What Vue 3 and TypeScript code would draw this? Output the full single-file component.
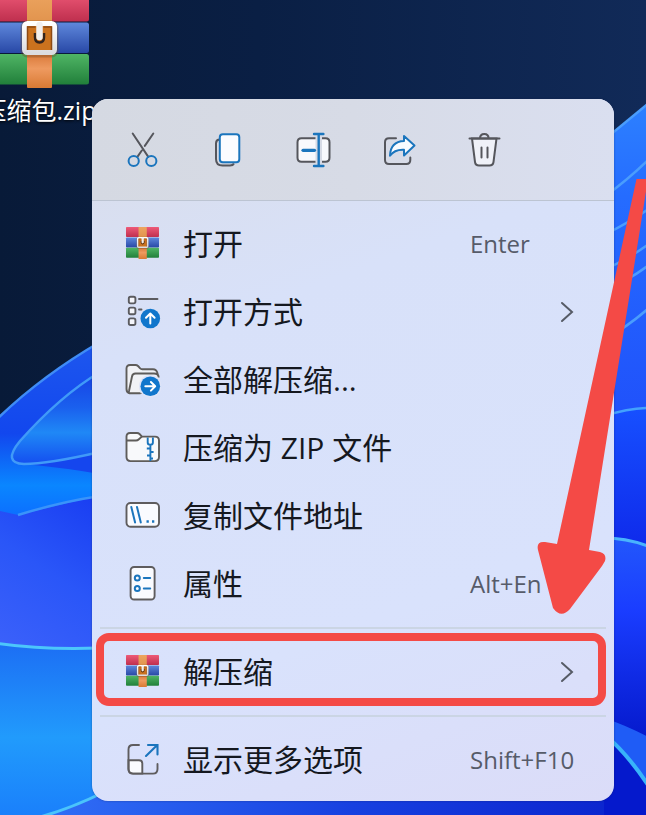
<script setup lang="ts">
interface Tool {
  icon: string
  label: string
}

interface MenuEntry {
  icon: string
  label: string
  shortcut?: string
  submenu?: boolean
  marked?: boolean
}

const tools: Tool[] = [
  { icon: 'cut', label: '剪切' },
  { icon: 'copy', label: '复制' },
  { icon: 'rename', label: '重命名' },
  { icon: 'share', label: '共享' },
  { icon: 'trash', label: '删除' },
]

const groups: MenuEntry[][] = [
  [
    { icon: 'archive', label: '打开', shortcut: 'Enter' },
    { icon: 'open-with', label: '打开方式', submenu: true },
    { icon: 'extract', label: '全部解压缩...' },
    { icon: 'zip', label: '压缩为 ZIP 文件' },
    { icon: 'path', label: '复制文件地址' },
    { icon: 'properties', label: '属性', shortcut: 'Alt+En' },
  ],
  [{ icon: 'archive', label: '解压缩', submenu: true, marked: true }],
  [{ icon: 'more', label: '显示更多选项', shortcut: 'Shift+F10' }],
]
</script>

<template>
  <svg class="sprite" aria-hidden="true">
    <defs>
      <linearGradient id="g-red" x1="0" y1="0" x2="0" y2="1">
        <stop offset="0" stop-color="#ee5a78" />
        <stop offset="1" stop-color="#bf2f4e" />
      </linearGradient>
      <linearGradient id="g-blue" x1="0" y1="0" x2="0" y2="1">
        <stop offset="0" stop-color="#5f88dc" />
        <stop offset="1" stop-color="#2848a6" />
      </linearGradient>
      <linearGradient id="g-green" x1="0" y1="0" x2="0" y2="1">
        <stop offset="0" stop-color="#4fb565" />
        <stop offset="1" stop-color="#217f3a" />
      </linearGradient>
      <linearGradient id="g-strap" x1="0" y1="0" x2="0" y2="1">
        <stop offset="0" stop-color="#eda560" />
        <stop offset="0.3" stop-color="#e2954f" />
        <stop offset="0.65" stop-color="#d9793a" />
        <stop offset="0.8" stop-color="#ee9a60" />
        <stop offset="1" stop-color="#d97a34" />
      </linearGradient>
      <linearGradient id="g-buckle" x1="0" y1="0" x2="0" y2="1">
        <stop offset="0" stop-color="#ffffff" />
        <stop offset="1" stop-color="#dcdce0" />
      </linearGradient>
    </defs>

    <symbol id="i-archive" viewBox="0 0 36 36">
      <g transform="translate(1 1) scale(0.33)">
        <use href="#archive-art" />
      </g>
    </symbol>
    <symbol id="i-archive-large" viewBox="0 0 100 97">
      <g id="archive-art">
        <rect x="0" y="0" width="100" height="30.5" rx="2.5" fill="url(#g-red)" />
        <rect x="0" y="31.5" width="100" height="30.5" rx="2.5" fill="url(#g-blue)" />
        <rect x="0" y="63" width="100" height="30.5" rx="2.5" fill="url(#g-green)" />
        <rect x="38" y="0" width="25" height="97" rx="1" fill="url(#g-strap)" />
        <rect x="35.5" y="33.5" width="30" height="29" rx="3" fill="none" stroke="#6d4420" stroke-width="8" stroke-opacity="0.35" />
        <rect x="35.5" y="32.5" width="30" height="29" rx="3" fill="#cb721e" stroke="url(#g-buckle)" stroke-width="5" />
        <path d="M38.500 59V36h8M54.500 36h8v23" fill="none" stroke="#8d4a14" stroke-width="1.5" />
        <path d="M46 42v4q0 5.500 4.500 5.500T55 46v-4" fill="none" stroke="#33241e" stroke-width="2.5" />
        <path d="M50.500 34v12" stroke="#f1efef" stroke-width="6.500" stroke-linecap="round" />
      </g>
    </symbol>

    <symbol id="i-cut" viewBox="0 0 40 40">
      <g fill="none" stroke-width="2">
        <path d="M9.7 3.500l15.6 23.400M30.300 3.500l-8.500 12.400M18.800 20.500l-4.400 6.400" stroke="#55565c" stroke-linecap="round" />
        <circle cx="10.7" cy="31" r="5.100" stroke="#1b75bd" />
        <circle cx="28.3" cy="31" r="5.100" stroke="#1b75bd" />
      </g>
    </symbol>
    <symbol id="i-copy" viewBox="0 0 40 40">
      <g fill="none" stroke-width="2">
        <path d="M11 9.500q-3 .5-3 4V29q0 6.500 6.500 6.500H22q3 0 4-2" stroke="#55565c" />
        <rect x="11.8" y="4.300" width="19.500" height="28" rx="3" fill="#fbfcff" stroke="#1b75bd" />
      </g>
    </symbol>
    <symbol id="i-rename" viewBox="0 0 40 40">
      <g fill="none" stroke-width="2">
        <path d="M22.500 8.300H8.500q-4 0-4 4v15.400q0 4 4 4h14zM29 8.300h3.500q4 0 4 4v15.400q0 4-4 4H29z" fill="#f8f9fd" />
        <path d="M22.500 8.300H8.500q-4 0-4 4v15.400q0 4 4 4h14M29 8.300h3.500q4 0 4 4v15.400q0 4-4 4H29" stroke="#55565c" />
        <path d="M10 20.300h11.500" stroke="#1b75bd" stroke-width="3.200" stroke-linecap="round" />
        <path d="M25.700 4v32M21 4h9.400M21 36h9.400" stroke="#1b75bd" stroke-width="2.400" stroke-linecap="round" />
      </g>
    </symbol>
    <symbol id="i-share" viewBox="0 0 40 40">
      <g fill="none" stroke-width="2" stroke-linejoin="round" stroke-linecap="round">
        <path d="M18 8.300h-7q-4 0-4 4V30q0 4 4 4h17.300q4 0 4-4v-2.500" stroke="#55565c" />
        <path d="M26 6l10.500 9.500L26 25.500v-5.800q-9.500-.5-14 6Q12.500 11.500 26 11z" fill="#f8fbff" stroke="#1b75bd" />
      </g>
    </symbol>
    <symbol id="i-trash" viewBox="0 0 40 40">
      <g fill="none" stroke="#55565c" stroke-width="2" stroke-linecap="round">
        <path d="M9 8.500l3 23.500q.5 3.500 4 3.500h10.500q3.500 0 4-3.500l3-23.500z" fill="#eff1f8" />
        <path d="M6.500 8.500h30M17 8.500Q17 4 21.300 4t4.300 4.500M18.500 17.500v10M24.500 17.500v10" />
      </g>
    </symbol>

    <symbol id="i-open-with" viewBox="0 0 36 36">
      <g fill="#f4f5fa" stroke="#5b5b5f" stroke-width="1.9">
        <rect x="3.8" y="2.800" width="6.600" height="6.600" rx="1.800" />
        <rect x="3.8" y="13.600" width="6.600" height="6.600" rx="1.800" />
        <rect x="3.8" y="24.400" width="6.600" height="6.600" rx="1.800" />
        <path d="M14 5h18.500M14 15.500h2.500" stroke-linecap="round" />
      </g>
      <circle cx="25.3" cy="24.500" r="9.800" fill="#1076cc" />
      <path d="M25.300 29.500v-9.500M21 23.800l4.300-4.300 4.300 4.300" fill="none" stroke="#fff" stroke-width="2" stroke-linecap="round" stroke-linejoin="round" />
    </symbol>
    <symbol id="i-extract" viewBox="0 0 36 36">
      <g fill="#f1f2f6" stroke="#5e5c5a" stroke-width="1.9" stroke-linejoin="round">
        <path d="M4.500 31q-3-.5-3-4V6.500Q1.500 3 5 3h5.500q1.500 0 2.500 1l2.200 2.400q.8.800 2 .8H28q3.500 0 4.500 4v3L26 31z" />
        <path d="M4.500 31.200Q3.500 31 4 29l3-14.500q.6-3 3.500-3h18.500q4.500 0 4.700 4L30 31.200z" stroke="none" />
        <path d="M15.500 31.200h-11Q3.500 31 4 29l3-14.500q.6-3 3.500-3h18.500q4.500 0 4.700 4" fill="none" />
      </g>
      <circle cx="25.3" cy="24.300" r="11.300" fill="#dee4f8" />
      <circle cx="25.3" cy="24.300" r="9.800" fill="#1076cc" />
      <path d="M20.300 24.300h9.500M25.900 20l4.300 4.300-4.300 4.300" fill="none" stroke="#fff" stroke-width="2" stroke-linecap="round" stroke-linejoin="round" />
    </symbol>
    <symbol id="i-zip" viewBox="0 0 36 36">
      <g fill="none" stroke="#5e5c5a" stroke-width="1.9" stroke-linejoin="round">
        <path d="M1.500 6.500Q1.500 3 5 3h7q1.500 0 2.500 1l2.500 2.600H30q4 0 4 4v16.500q0 4-4 4H5.500q-4 0-4-4z" fill="#f8f9fb" />
        <path d="M1.500 10.500H11q1.600 0 2.600-1L16.800 6.600" />
      </g>
      <path d="M22.700 7.500v5q0 2.300 2.600 2.300t2.600-2.300v-5M25.400 15v16M21.800 18.500h3.600M25.400 22h3.200M22 25.500h3.400M25.400 28.500h2.600" fill="none" stroke="#1b75bd" stroke-width="1.9" />
    </symbol>
    <symbol id="i-path" viewBox="0 0 36 36">
      <rect x="1.5" y="5" width="32.500" height="23.800" rx="4" fill="#fafbff" stroke="#5e5c5e" stroke-width="1.9" />
      <path d="M6.300 9l3.800 15.500M12 9l3.800 15.500" fill="none" stroke="#1b75bd" stroke-width="2" stroke-linecap="round" />
      <path d="M21.500 23.600h2.300M27 23.600h2.300" stroke="#1b75bd" stroke-width="2.500" />
    </symbol>
    <symbol id="i-properties" viewBox="0 0 36 36">
      <rect x="5.6" y="1" width="24" height="32.500" rx="3.500" fill="#fafbff" stroke="#5e5c5e" stroke-width="1.9" />
      <g fill="none" stroke="#1b75bd" stroke-width="2">
        <circle cx="12.3" cy="12" r="2.500" />
        <circle cx="12.3" cy="22.400" r="2.500" />
        <path d="M18.800 12h6.400M18.800 22.400h6.400" stroke-linecap="round" />
      </g>
    </symbol>
    <symbol id="i-more" viewBox="0 0 36 36">
      <g fill="none" stroke-width="1.9" stroke-linecap="round">
        <path d="M3.500 18.300H14q3.300 0 3.300 3.300v10H8q-4.500 0-4.500-4.500z" fill="#fafbff" stroke="#5e5c5e" />
        <path d="M14 3H8Q3.500 3 3.500 7.500V27q0 4.600 4.500 4.600h20q4.500 0 4.500-4.600v-5" stroke="#5e5c5e" />
        <path d="M21 14L32 3.300M23 3h9.500v9.500" stroke="#1b75bd" stroke-width="2.100" />
      </g>
    </symbol>
  </svg>

  <main class="desktop">
    <svg class="wallpaper" viewBox="0 0 646 815" preserveAspectRatio="xMidYMid slice" aria-hidden="true">
      <defs>
        <linearGradient id="w-sky" x1="0" y1="0" x2="1" y2="0">
          <stop offset="0" stop-color="#081a38" />
          <stop offset="0.4" stop-color="#0a1f44" />
          <stop offset="1" stop-color="#112a58" />
        </linearGradient>
        <linearGradient id="w-outer" x1="0" y1="347" x2="0" y2="520" gradientUnits="userSpaceOnUse">
          <stop offset="0" stop-color="#1d56ee" />
          <stop offset="0.5" stop-color="#1247ee" />
          <stop offset="0.8" stop-color="#0a86ff" />
          <stop offset="1" stop-color="#0c6cff" />
        </linearGradient>
        <linearGradient id="w-inner" x1="0" y1="378" x2="0" y2="462" gradientUnits="userSpaceOnUse">
          <stop offset="0" stop-color="#1746e6" />
          <stop offset="0.35" stop-color="#1a60ee" />
          <stop offset="0.65" stop-color="#1f88f6" />
          <stop offset="1" stop-color="#1552f0" />
        </linearGradient>
        <linearGradient id="w-mid" x1="92" y1="500" x2="0" y2="640" gradientUnits="userSpaceOnUse">
          <stop offset="0" stop-color="#1a3ff2" />
          <stop offset="0.5" stop-color="#2a56f8" />
          <stop offset="1" stop-color="#3a60fa" />
        </linearGradient>
        <linearGradient id="w-low" x1="0" y1="643" x2="0" y2="815" gradientUnits="userSpaceOnUse">
          <stop offset="0" stop-color="#1c6ef4" />
          <stop offset="0.55" stop-color="#219bfc" />
          <stop offset="1" stop-color="#1a80fb" />
        </linearGradient>
        <linearGradient id="w-base" x1="60" y1="0" x2="646" y2="0" gradientUnits="userSpaceOnUse">
          <stop offset="0" stop-color="#2f6cf5" />
          <stop offset="0.5" stop-color="#1740e0" />
          <stop offset="1" stop-color="#0a22cc" />
        </linearGradient>
        <linearGradient id="w-r1" x1="0" y1="105" x2="0" y2="410" gradientUnits="userSpaceOnUse">
          <stop offset="0" stop-color="#2d80ff" />
          <stop offset="0.3" stop-color="#256cff" />
          <stop offset="1" stop-color="#2052fb" />
        </linearGradient>
        <linearGradient id="w-r2" x1="0" y1="408" x2="0" y2="540" gradientUnits="userSpaceOnUse">
          <stop offset="0" stop-color="#1750ff" />
          <stop offset="1" stop-color="#0f2cec" />
        </linearGradient>
        <linearGradient id="w-r3" x1="0" y1="540" x2="0" y2="740" gradientUnits="userSpaceOnUse">
          <stop offset="0" stop-color="#2256fb" />
          <stop offset="0.35" stop-color="#1a3dff" />
          <stop offset="1" stop-color="#0519cc" />
        </linearGradient>
      </defs>
      <rect width="646" height="815" fill="url(#w-sky)" />

      <path d="M-5 421Q40 377 100 342V540H-5z" fill="url(#w-outer)" />
      <path d="M-5 421Q40 377 100 342" fill="none" stroke="#3f8cf6" stroke-width="2.5" />
      <path d="M100 372Q60 396 20 441Q2 463 24 464Q48 464 100 452z" fill="url(#w-inner)" />
      <path d="M24 464Q50 463 100 452V474Q66 468 24 464z" fill="#1546ee" />
      <path d="M100 372Q60 396 20 441Q2 463 24 464Q48 464 100 452" fill="none" stroke="#409af8" stroke-width="2.5" />
      <path d="M-5 510L18 515Q60 505 100 495V660H-5z" fill="url(#w-mid)" />
      <path d="M18 515Q60 502 100 496" fill="none" stroke="#3a94fa" stroke-width="2.5" />

      <path d="M-5 643Q40 650 100 648V815H-5z" fill="url(#w-low)" />
      <path d="M-5 643Q40 650 100 648" fill="none" stroke="#4cc6fb" stroke-width="3" />
      <path d="M40 817Q72 808 104 792H646V817z" fill="url(#w-base)" />
      <path d="M40 817Q72 808 104 792" fill="none" stroke="#4ac4fb" stroke-width="3" />

      <path d="M604 140L650 102V420H604z" fill="url(#w-r1)" />
      <g fill="none" stroke="#4a9dfd" stroke-width="2.5">
        <path d="M604 140L650 102" />
        <path d="M604 197Q630 178 650 158" />
        <path d="M604 235Q630 222 650 208" />
        <path d="M604 270Q630 258 650 243" />
        <path d="M604 290Q630 280 650 264" />
        <path d="M604 340Q630 325 650 307" />
      </g>
      <path d="M604 416Q630 408 650 408V560H604z" fill="url(#w-r2)" />
      <path d="M604 416Q630 408 650 408" fill="none" stroke="#43a2fd" stroke-width="2.5" />
      <path d="M604 538Q628 538 650 547V815H604z" fill="url(#w-r3)" />
      <path d="M604 538Q628 538 650 547" fill="none" stroke="#49b4fd" stroke-width="3" />
      <path d="M604 718Q628 726 650 738V786Q628 754 604 734z" fill="#1f5cf6" />
      <path d="M604 734Q628 754 650 788" fill="none" stroke="#38b4fa" stroke-width="4" />
    </svg>

    <figure class="file">
      <svg class="file-icon" aria-hidden="true"><use href="#i-archive-large" /></svg>
      <figcaption>压缩包.zip</figcaption>
    </figure>

    <nav class="menu" aria-label="文件菜单">
      <div class="toolbar">
        <button v-for="tool in tools" :key="tool.icon" class="tool" type="button" :aria-label="tool.label">
          <svg class="tool-icon" aria-hidden="true"><use :href="`#i-${tool.icon}`" /></svg>
        </button>
      </div>
      <div class="groups">
        <ul v-for="(group, index) in groups" :key="index" class="group">
          <li v-for="entry in group" :key="entry.label">
            <button class="entry" :class="{ marked: entry.marked }" type="button">
              <svg class="entry-icon" aria-hidden="true"><use :href="`#i-${entry.icon}`" /></svg>
              <span class="label">{{ entry.label }}</span>
              <kbd v-if="entry.shortcut" class="shortcut">{{ entry.shortcut }}</kbd>
              <svg v-if="entry.submenu" class="chevron" viewBox="0 0 14 22" aria-hidden="true">
                <path d="M2 2l10 9-10 9" />
              </svg>
            </button>
          </li>
        </ul>
      </div>
    </nav>

    <svg class="arrow" viewBox="0 0 120 450" aria-hidden="true">
      <path d="M106.500 9H118L59 380L70 382Q77 384 75 391L72 396L40 439Q31 449 23 438L8 380Q6 371 15 372L27 374z" />
    </svg>
  </main>
</template>

<style>
body {
  margin: 0;
}
</style>

<style scoped>
.sprite {
  position: absolute;
  width: 0;
  height: 0;
}

.desktop {
  position: relative;
  box-sizing: border-box;
  min-height: 100vh;
  padding: 99px 32px 14px 92px;
  overflow: hidden;
  background: #0a1e42;
  font-family: "Open Sans", "Noto Sans CJK SC", sans-serif;
}

.wallpaper {
  position: absolute;
  inset: 0;
  width: 100%;
  height: 100%;
}

.file {
  position: absolute;
  top: -9px;
  left: -21px;
  display: flex;
  flex-direction: column;
  align-items: center;
  width: 120px;
  margin: 0;
  color: #fff;
  font-size: 25px;
  line-height: 44px;
  text-shadow: 0 1px 3px #000;
  white-space: nowrap;
}

.file-icon {
  width: 100px;
  height: 97px;
}

.menu {
  position: relative;
  overflow: hidden;
  border-radius: 16px;
  background: linear-gradient(160deg, #d9dde9 0%, #d8e1f9 30%, #d9e2fc 70%, #dbdcf8 100%);
  box-shadow: 0 0 2px #16204880;
}

.toolbar {
  display: flex;
  gap: 37px;
  padding: 27px 27px 26px;
  border-bottom: 1px solid #bcc4d2;
  background: linear-gradient(90deg, #d5d9e2, #d7dbe6 50%, #dadff0);
}

.tool {
  display: grid;
  place-items: center;
  width: 48px;
  height: 48px;
  padding: 0;
  border: 0;
  background: none;
}

.tool-icon {
  width: 40px;
  height: 40px;
}

.groups {
  padding: 9px 0 7px;
}

.group {
  margin: 0;
  padding: 0;
  list-style: none;
}

.group + .group::before {
  content: "";
  display: block;
  height: 2px;
  margin: 9px 8px;
  background: #cbd5e4;
}

.entry {
  position: relative;
  display: grid;
  grid-template-columns: 36px 1fr 144px;
  align-items: center;
  column-gap: 22px;
  width: 100%;
  height: 68px;
  padding: 0 0 0 33px;
  border: 0;
  background: none;
  color: #15181f;
  font-family: inherit;
  font-size: 30px;
  line-height: 40px;
  text-align: left;
}

.entry-icon {
  width: 36px;
  height: 36px;
}

.label {
  white-space: nowrap;
}

.shortcut {
  color: #565b69;
  font-family: inherit;
  font-size: 24px;
}

.chevron {
  justify-self: end;
  width: 14px;
  height: 22px;
  margin-right: 40px;
  fill: none;
  stroke: #565b66;
  stroke-width: 2;
  stroke-linecap: round;
}

.marked::after {
  content: "";
  position: absolute;
  inset: -5px 8px 0 4px;
  border: 8px solid #f44a46;
  border-radius: 13px;
}

.arrow {
  position: absolute;
  top: 170px;
  right: -4px;
  width: 120px;
  height: 450px;
  fill: #f44a46;
  pointer-events: none;
}
</style>
